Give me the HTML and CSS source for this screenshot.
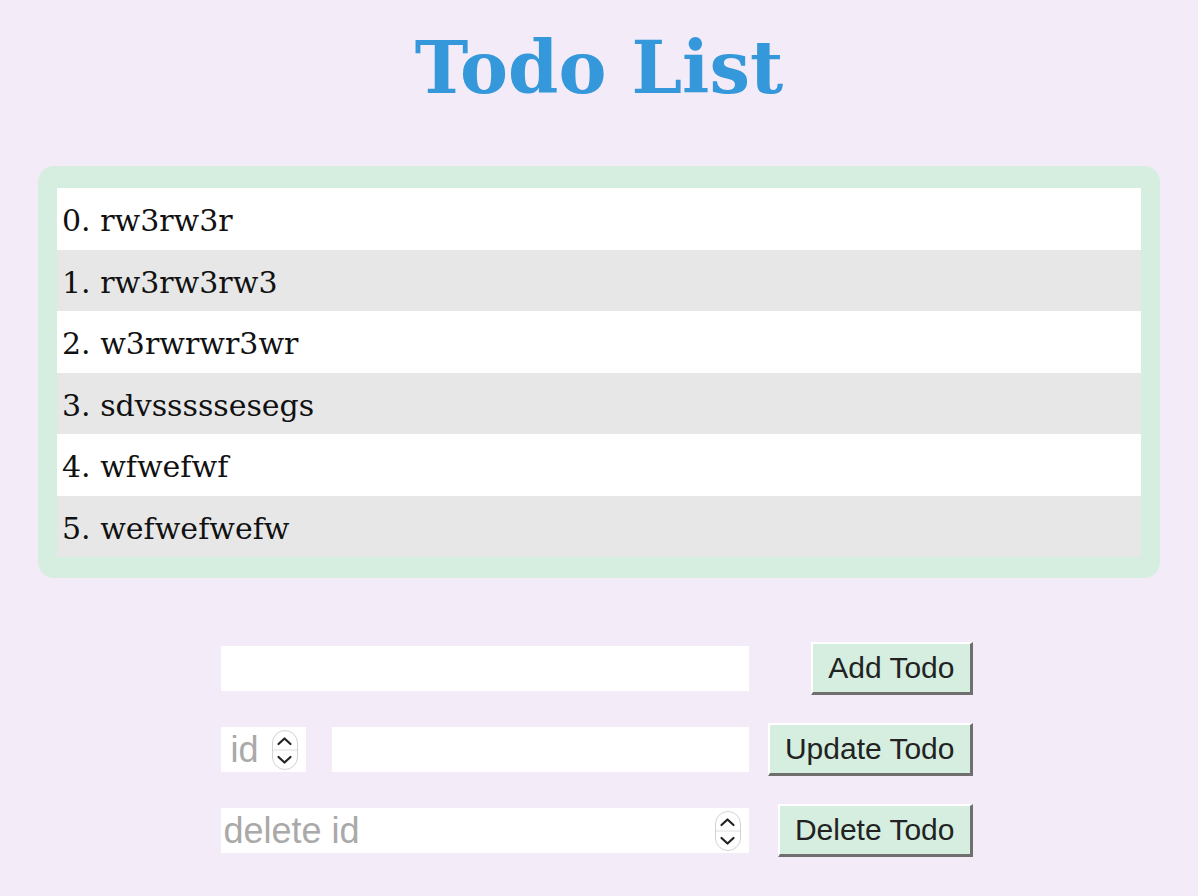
FILE: index.html
```html
<!DOCTYPE html>
<html lang="en">
<head>
<meta charset="utf-8">
<title>Todo List</title>
<link rel="stylesheet" href="styles.css">
</head>
<body>
  <h1 class="title">Todo List</h1>
  <div class="list-box">
    <ul class="todo-list">
      <li class="todo">0. rw3rw3r</li>
      <li class="todo">1. rw3rw3rw3</li>
      <li class="todo">2. w3rwrwr3wr</li>
      <li class="todo">3. sdvsssssesegs</li>
      <li class="todo">4. wfwefwf</li>
      <li class="todo">5. wefwefwefw</li>
    </ul>
  </div>
  <div class="form">
    <input class="text-input" type="text">
    <button class="btn">Add Todo</button>

    <div class="update-fields">
      <div class="numfield numfield-id">
        <input class="num-input num-id" type="text" placeholder="id">
        <svg class="spinner" width="26" height="40" viewBox="0 0 26 40"><rect x="0.5" y="0.5" width="25" height="39" rx="12.5" fill="#fff" stroke="#d2d2d2"/><line x1="1" y1="20" x2="25" y2="20" stroke="#dedede"/><path d="M6.5 14 L12.5 8.5 L18.5 14" fill="none" stroke="#222" stroke-width="2.2" stroke-linecap="round" stroke-linejoin="round"/><path d="M6.5 27 L12.5 32.5 L18.5 27" fill="none" stroke="#222" stroke-width="2.2" stroke-linecap="round" stroke-linejoin="round"/></svg>
      </div>
      <input class="text-input" type="text">
    </div>
    <button class="btn">Update Todo</button>

    <div class="numfield">
      <input class="num-input num-del" type="text" placeholder="delete id">
      <svg class="spinner" width="26" height="40" viewBox="0 0 26 40"><rect x="0.5" y="0.5" width="25" height="39" rx="12.5" fill="#fff" stroke="#d2d2d2"/><line x1="1" y1="20" x2="25" y2="20" stroke="#dedede"/><path d="M6.5 14 L12.5 8.5 L18.5 14" fill="none" stroke="#222" stroke-width="2.2" stroke-linecap="round" stroke-linejoin="round"/><path d="M6.5 27 L12.5 32.5 L18.5 27" fill="none" stroke="#222" stroke-width="2.2" stroke-linecap="round" stroke-linejoin="round"/></svg>
    </div>
    <button class="btn">Delete Todo</button>
  </div>
</body>
</html>
```
FILE: styles.css
```css
html, body {
  margin: 0;
  padding: 0;
  background: #f4ebf8;
}

body {
  font-family: "DejaVu Serif", "Liberation Serif", serif;
}

.title {
  margin: 26px 0 56px;
  text-align: center;
  font-family: "DejaVu Serif", serif;
  font-weight: bold;
  font-size: 72px;
  color: #3498db;
  line-height: 84px;
}

.list-box {
  margin: 0 38px;
  padding: 22px 19px 21px;
  background: #d5eee0;
  border-radius: 16px;
}

.todo-list {
  list-style: none;
  margin: 0;
  padding: 0;
}

.todo {
  height: 57.5px;
  line-height: 57.5px;
  padding: 4px 5px 0;
  font-size: 30px;
  color: #111;
  background: #fff;
}

.todo:nth-child(even) {
  background: #e7e7e7;
}

.form {
  width: 752px;
  padding-right: 5px;
  margin: 64px auto 0;
  display: grid;
  grid-template-columns: 528px 1fr;
  row-gap: 28px;
  align-items: center;
  justify-items: end;
  font-family: "Liberation Sans", Arial, sans-serif;
}

.form > *:nth-child(odd) {
  justify-self: stretch;
}

.text-input {
  box-sizing: border-box;
  height: 45px;
  border: none;
  background: #fff;
  outline: none;
  padding: 0 4px;
  font-family: "Liberation Sans", Arial, sans-serif;
  font-size: 30px;
}

.update-fields {
  display: flex;
  gap: 26px;
  align-items: center;
}

.update-fields .text-input {
  flex: 1;
  min-width: 0;
}

.numfield {
  display: flex;
  align-items: center;
  height: 45px;
  background: #fff;
}

.numfield-id {
  width: 85px;
  flex: none;
}

.num-input {
  flex: 1;
  min-width: 0;
  height: 45px;
  border: none;
  background: transparent;
  outline: none;
  font-family: "Liberation Sans", Arial, sans-serif;
  font-size: 36px;
  color: #222;
}

.num-input::placeholder {
  color: #a9a9a9;
}

.num-id {
  padding: 0 0 0 10px;
}

.num-del {
  padding: 0 0 0 3px;
}

.spinner {
  display: block;
  flex: none;
  margin-right: 8px;
}

.btn {
  box-sizing: border-box;
  height: 53px;
  padding: 0 15px;
  background: #d5eee0;
  border-style: solid;
  border-width: 2px 3px 3px 2px;
  border-color: #ffffff #6f6f6f #6f6f6f #ffffff;
  font-family: "Liberation Sans", Arial, sans-serif;
  font-size: 30px;
  color: #222;
  cursor: pointer;
}
```
